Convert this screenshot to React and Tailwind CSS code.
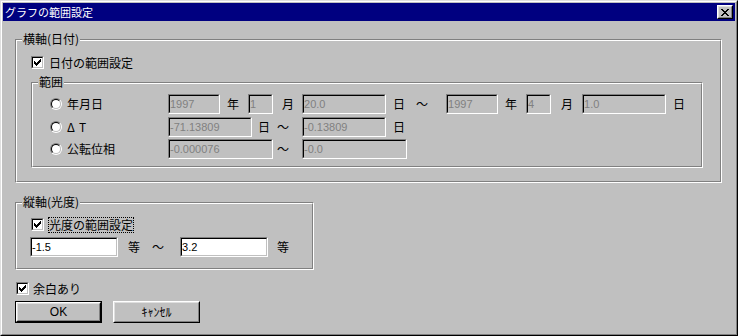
const JP = "font-['Noto_Sans_CJK_JP','Liberation_Sans',sans-serif]";
const LAT = "font-['Liberation_Sans','Noto_Sans_CJK_JP',sans-serif]";

function CheckMark() {
  const px = [
    [6, 0], [5, 1], [6, 1], [0, 2], [4, 2], [5, 2], [6, 2],
    [0, 3], [1, 3], [3, 3], [4, 3], [5, 3],
    [0, 4], [1, 4], [2, 4], [3, 4], [4, 4],
    [1, 5], [2, 5], [3, 5], [2, 6],
  ];
  return (
    <svg width="7" height="7" viewBox="0 0 7 7" shapeRendering="crispEdges">
      {px.map(([x, y]) => (
        <rect key={x + "-" + y} x={x} y={y} width="1" height="1" fill="#000" />
      ))}
    </svg>
  );
}

function CloseGlyph() {
  const rows = [
    "XX....XX",
    ".XX..XX.",
    "..XXXX..",
    "...XX...",
    "..XXXX..",
    ".XX..XX.",
    "XX....XX",
  ];
  const px = [];
  rows.forEach((r, y) =>
    r.split("").forEach((c, x) => {
      if (c === "X") px.push([x, y]);
    })
  );
  return (
    <svg width="8" height="7" viewBox="0 0 8 7" shapeRendering="crispEdges">
      {px.map(([x, y]) => (
        <rect key={x + "-" + y} x={x} y={y} width="1" height="1" fill="#000" />
      ))}
    </svg>
  );
}

function Checkbox() {
  return (
    <div className="w-[13px] h-[13px] shrink-0 border border-t-[#808080] border-l-[#808080] border-b-white border-r-white">
      <div className="w-full h-full border border-t-black border-l-black border-b-[#c0c0c0] border-r-[#c0c0c0] bg-white p-px">
        <CheckMark />
      </div>
    </div>
  );
}

function Radio() {
  return (
    <div className="w-[12px] h-[12px] shrink-0 rounded-full border border-t-[#808080] border-l-[#808080] border-b-white border-r-white">
      <div className="w-full h-full rounded-full border border-t-black border-l-black border-b-[#c0c0c0] border-r-[#c0c0c0] bg-white" />
    </div>
  );
}

function Field({ w, value, enabled }) {
  return (
    <div className={"h-[20px] shrink-0 border border-t-[#808080] border-l-[#808080] border-b-white border-r-white " + w}>
      <div
        className={
          "w-full h-full border border-t-black border-l-black border-b-[#c0c0c0] border-r-[#c0c0c0] flex items-center text-[11px] leading-[14px] whitespace-nowrap overflow-hidden " +
          LAT +
          (enabled ? " bg-white text-black" : " bg-[#c0c0c0] text-[#808080]")
        }
      >
        {value}
      </div>
    </div>
  );
}

function Lbl({ children, className }) {
  return (
    <span className={"shrink-0 text-[12px] leading-[14px] whitespace-nowrap " + JP + " " + (className || "")}>
      {children}
    </span>
  );
}

function Group({ label, className, children }) {
  return (
    <div className={"relative shrink-0 border border-t-[#808080] border-l-[#808080] border-b-white border-r-white " + className}>
      <div className="w-full h-full border border-t-white border-l-white border-b-[#808080] border-r-[#808080]">
        {children}
      </div>
      <span className={"absolute top-[-8px] left-[6px] px-px bg-[#c0c0c0] text-[12px] leading-[14px] whitespace-nowrap " + JP}>
        {label}
      </span>
    </div>
  );
}

function RadioLabel({ children }) {
  return (
    <div className="w-[118px] shrink-0 flex items-center">
      <Radio />
      <Lbl className="ml-[5px]">{children}</Lbl>
    </div>
  );
}

export default function App() {
  return (
    <div className="w-[738px] h-[336px] bg-[#c0c0c0] border border-t-[#dfdfdf] border-l-[#dfdfdf] border-b-black border-r-black text-black">
      <div className="w-full h-full border border-t-white border-l-white border-b-[#808080] border-r-[#808080] p-px flex flex-col">
        {/* title bar */}
        <div className="h-[18px] shrink-0 bg-[#000080] flex items-center justify-between pl-[2px] pr-[2px]">
          <span className={"text-white text-[11px] leading-[14px] whitespace-nowrap " + JP}>グラフの範囲設定</span>
          <div className="w-[16px] h-[14px] border border-t-white border-l-white border-b-black border-r-black bg-[#c0c0c0]">
            <div className="w-full h-full border border-t-[#dfdfdf] border-l-[#dfdfdf] border-b-[#808080] border-r-[#808080] flex items-center justify-center">
              <CloseGlyph />
            </div>
          </div>
        </div>

        {/* body */}
        <div className="pl-[12px] pt-[18px] flex flex-col items-start">
          <Group label="横軸(日付)" className="w-[707px] h-[144px]">
            <div className="mt-[15px] ml-[14px] flex items-center h-[13px]">
              <Checkbox />
              <Lbl className="ml-[5px]">日付の範囲設定</Lbl>
            </div>
            <div className="mt-[13px] ml-[14px]">
              <Group label="範囲" className="w-[672px] h-[86px]">
                <div className="pt-[10px] pl-[17px] flex flex-col">
                  {/* row 1 */}
                  <div className="flex items-center h-[20px]">
                    <RadioLabel>年月日</RadioLabel>
                    <Field w="w-[52px]" value="1997" />
                    <Lbl className="ml-[7px]">年</Lbl>
                    <Field w="w-[25px] ml-[9px]" value="1" />
                    <Lbl className="ml-[9px]">月</Lbl>
                    <Field w="w-[84px] ml-[8px]" value="20.0" />
                    <Lbl className="ml-[7px]">日</Lbl>
                    <Lbl className="ml-[11px]">～</Lbl>
                    <Field w="w-[52px] ml-[18px]" value="1997" />
                    <Lbl className="ml-[7px]">年</Lbl>
                    <Field w="w-[25px] ml-[9px]" value="4" />
                    <Lbl className="ml-[10px]">月</Lbl>
                    <Field w="w-[84px] ml-[9px]" value="1.0" />
                    <Lbl className="ml-[7px]">日</Lbl>
                  </div>
                  {/* row 2 */}
                  <div className="mt-[3px] flex items-center h-[20px]">
                    <div className="w-[118px] shrink-0 flex items-center">
                      <Radio />
                      <span className={"ml-[5px] text-[12px] leading-[14px] whitespace-nowrap font-normal " + JP}>
                        <span className="tracking-[4px]">Δ</span>T
                      </span>
                    </div>
                    <Field w="w-[84px]" value="-71.13809" />
                    <Lbl className="ml-[6px]">日</Lbl>
                    <Lbl className="ml-[7px]">～</Lbl>
                    <Field w="w-[84px] ml-[13px]" value="-0.13809" />
                    <Lbl className="ml-[7px]">日</Lbl>
                  </div>
                  {/* row 3 */}
                  <div className="mt-[2px] flex items-center h-[20px]">
                    <RadioLabel>公転位相</RadioLabel>
                    <Field w="w-[105px]" value="-0.000076" />
                    <Lbl className="ml-[4px]">～</Lbl>
                    <Field w="w-[105px] ml-[13px]" value="-0.0" />
                  </div>
                </div>
              </Group>
            </div>
          </Group>

          <div className="mt-[19px]">
            <Group label="縦軸(光度)" className="w-[299px] h-[68px]">
              <div className="mt-[14px] ml-[14px] flex items-center h-[13px]">
                <Checkbox />
                <span className={"ml-[4px] border border-dotted border-black text-[12px] leading-[14px] whitespace-nowrap " + JP}>
                  光度の範囲設定
                </span>
              </div>
              <div className="mt-[6px] ml-[13px] flex items-center h-[20px]">
                <Field w="w-[88px]" value="-1.5" enabled />
                <Lbl className="ml-[10px]">等</Lbl>
                <Lbl className="ml-[12px]">～</Lbl>
                <Field w="w-[88px] ml-[16px]" value="3.2" enabled />
                <Lbl className="ml-[9px]">等</Lbl>
              </div>
            </Group>
          </div>

          <div className="mt-[12px] ml-px flex items-center h-[13px]">
            <Checkbox />
            <Lbl className="ml-[4px]">余白あり</Lbl>
          </div>

          <div className="mt-[6px] flex gap-[11px]">
            <div className="w-[87px] h-[22px] border border-black">
              <div className="w-full h-full border border-t-white border-l-white border-b-black border-r-black">
                <div className={"w-full h-full border border-t-[#dfdfdf] border-l-[#dfdfdf] border-b-[#808080] border-r-[#808080] flex items-center justify-center text-[12px] leading-[14px] " + LAT}>
                  OK
                </div>
              </div>
            </div>
            <div className="w-[87px] h-[22px] border border-t-white border-l-white border-b-black border-r-black">
              <div className={"w-full h-full border border-t-[#dfdfdf] border-l-[#dfdfdf] border-b-[#808080] border-r-[#808080] flex items-center justify-center text-[12px] leading-[14px] " + JP}>
                ｷｬﾝｾﾙ
              </div>
            </div>
          </div>
        </div>
      </div>
    </div>
  );
}
